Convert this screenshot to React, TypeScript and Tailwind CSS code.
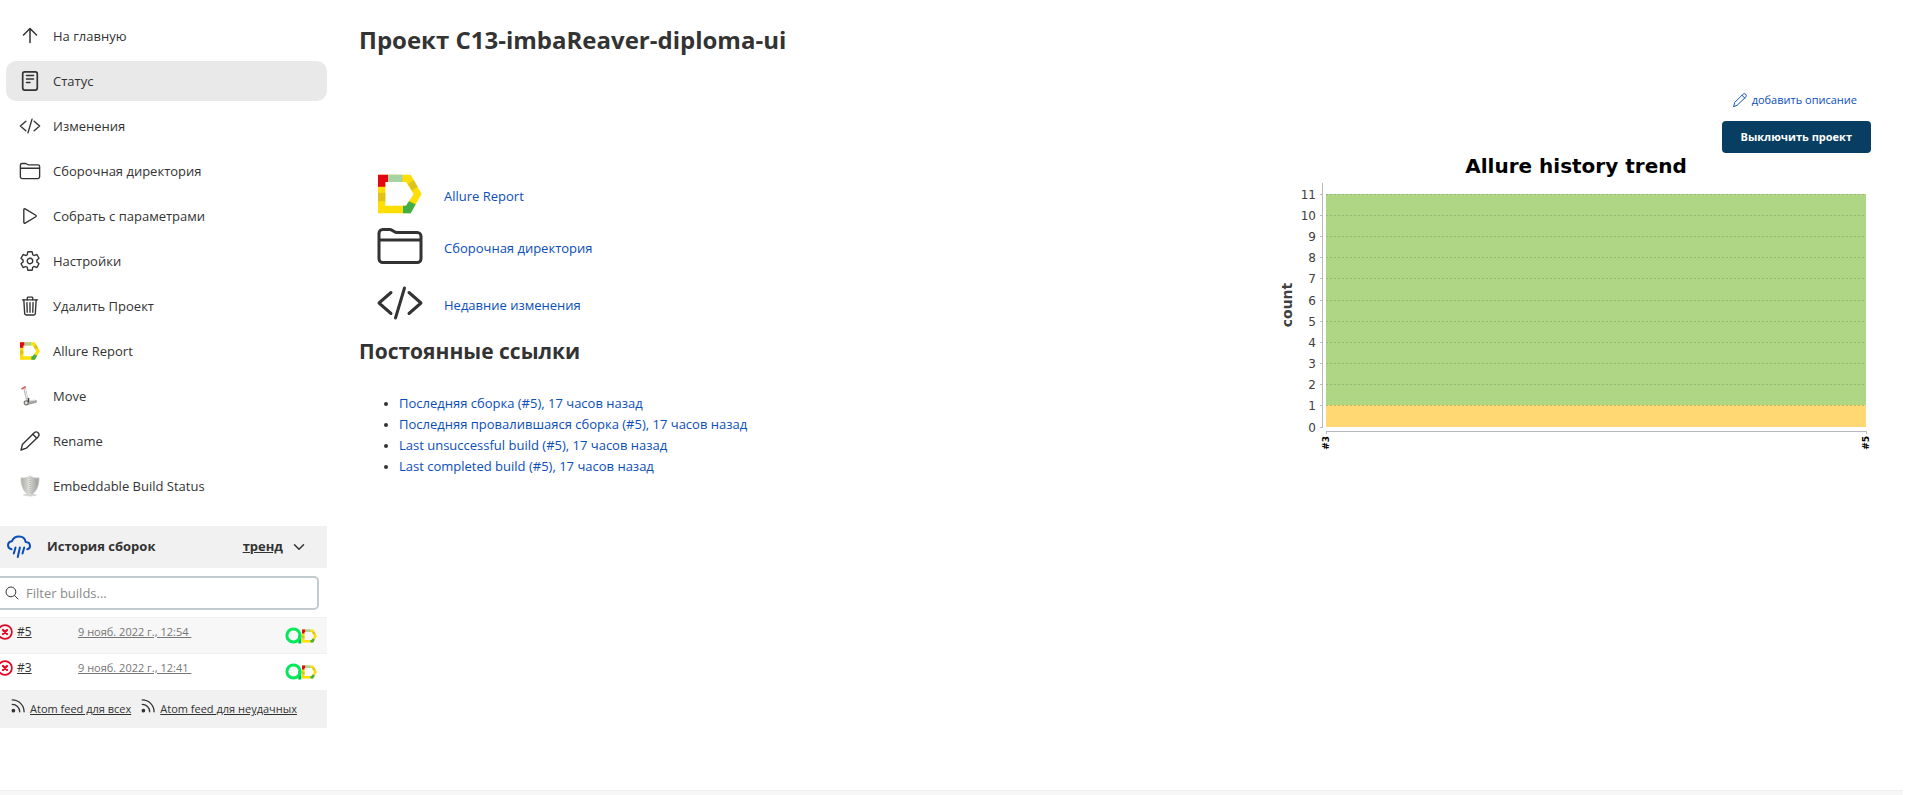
import React from "react";
import {
  IoChevronDownOutline,
  IoCodeSlashOutline,
  IoFolderOutline,
  IoPlayOutline,
  IoSearchOutline,
  IoSettingsOutline,
  IoTrashOutline,
} from "react-icons/io5";

type IconProps = { className?: string };

function AllureIcon({ className }: IconProps) {
  return (
    <svg viewBox="0 0 132 116" className={className} aria-hidden="true">
      <path fill="#ffde06" fillRule="evenodd" d="M0 0H98L131 58 98 116H0ZM22 22V93H84L107 58 84 22Z" />
      <path fill="#e30613" d="M0 0H30V22H22V36H0Z" />
      <path fill="#a5d3a3" d="M30 0H73V22H30Z" />
      <path fill="#dfc31a" d="M0 54H22V80H0ZM107 16 119 37 102 48 90 29Z" />
      <path fill="#3fb049" d="M75 93H84L93 80 113 89 98 116H75Z" />
    </svg>
  );
}

function ArrowUpIcon({ className }: IconProps) {
  return (
    <svg viewBox="0 0 20 20" className={className} fill="none" stroke="currentColor" strokeWidth="1.5" strokeLinecap="round" strokeLinejoin="round" aria-hidden="true">
      <path d="M3.500 9 10 2.500 16.500 9M10 2.800V16.500" />
    </svg>
  );
}

function DocumentIcon({ className }: IconProps) {
  return (
    <svg viewBox="0 0 20 20" className={className} fill="none" stroke="currentColor" strokeLinecap="round" strokeLinejoin="round" aria-hidden="true">
      <rect x="2.7" y="0.9" width="14.6" height="18.2" rx="2" strokeWidth="1.7" />
      <path strokeWidth="1.5" d="M6.500 4.600H13.500M6.500 8H13.500M6.500 11.400H10" />
    </svg>
  );
}

function PencilIcon({ className }: IconProps) {
  return (
    <svg viewBox="0 0 20 20" className={className} fill="none" stroke="currentColor" strokeWidth="1.4" strokeLinecap="round" strokeLinejoin="round" aria-hidden="true">
      <path d="M1 19 2.400 13.600 14 2C15.300.7 17 .7 18.100 1.800 19.300 3 19.200 4.700 18 6L6.300 17.200Z" />
      <path d="M12.800 3.200 16.800 7.200" />
    </svg>
  );
}

function MoveIcon({ className }: IconProps) {
  return (
    <svg viewBox="0 0 20 20" className={className} fill="none" strokeLinecap="round" aria-hidden="true">
      <path d="M4.500 2 7.500 15" stroke="#b9b9b5" strokeWidth="2.600" />
      <path d="M5 3 7.600 14" stroke="#f4f4f2" strokeWidth="1" />
      <path d="M1.800 2.800 5.200.8" stroke="#d9565b" strokeWidth="1.500" />
      <path d="M7 17.500 15.500 15.500" stroke="#a3a5a1" strokeWidth="3" />
      <path d="M9 15 15 14.200" stroke="#d8dad6" strokeWidth="1.200" />
      <circle cx="6.200" cy="16.800" r="2" fill="#e8e8e6" stroke="#777975" strokeWidth="1.200" />
      <path d="M8.500 12.500V15.500" stroke="#3d3d3d" strokeWidth="1.500" />
    </svg>
  );
}

function ShieldIcon({ className }: IconProps) {
  return (
    <svg viewBox="0 0 20 22" className={className} aria-hidden="true">
      <defs>
        <linearGradient id="shield" x1="0" x2="1" y1="0" y2="0">
          <stop offset="0" stopColor="#a9aba7" />
          <stop offset="0.500" stopColor="#e2e3df" />
          <stop offset="0.550" stopColor="#c9cac6" />
          <stop offset="1" stopColor="#999b97" />
        </linearGradient>
      </defs>
      <ellipse cx="10" cy="20" rx="7" ry="1.500" fill="#d9d9d9" />
      <path d="M10 .8C12 2.800 15.500 3.300 19 2.800 19.200 10 17 17 10 20.800 3 17 .8 10 1 2.800 4.500 3.300 8 2.800 10 .8Z" fill="url(#shield)" stroke="#c9cac6" strokeWidth="0.800" />
      <path d="M10 3V18" stroke="#a5a7a3" strokeWidth="1" strokeDasharray="1 1" />
    </svg>
  );
}

function RainIcon({ className }: IconProps) {
  return (
    <svg viewBox="0 0 24 24" className={className} fill="none" stroke="currentColor" strokeWidth="2" strokeLinecap="round" strokeLinejoin="round" aria-hidden="true">
      <path d="M4.600 14.300C2.500 13.800 1 12.300 1 10.300 1 8 2.700 6.500 5 6.200 6 3.500 8.700 1.600 12 1.600 15.300 1.600 18 3.600 18.600 6.900 21.200 7 23 8.600 23 10.900 23 12.700 21.900 13.900 20.200 14.200" />
      <path d="M8.500 12.500 6.800 18.500M12.900 12.500 10.800 22M17.200 12.500 15.500 18.500" />
    </svg>
  );
}

function RssIcon({ className }: IconProps) {
  return (
    <svg viewBox="0 0 14 14" className={className} fill="none" stroke="currentColor" strokeWidth="1.300" strokeLinecap="round" aria-hidden="true">
      <circle cx="2.400" cy="11.600" r="1.200" fill="currentColor" />
      <path d="M1.200 5.300A7.500 7.500 0 0 1 8.700 12.800M1.200.9A11.900 11.900 0 0 1 13.100 12.800" />
    </svg>
  );
}

function FailedIcon({ className }: IconProps) {
  return (
    <svg viewBox="0 0 16 16" className={className} fill="none" stroke="#e6001f" strokeLinecap="round" aria-hidden="true">
      <circle cx="8" cy="8" r="6.900" strokeWidth="1.700" />
      <path d="M6 6 10 10M10 6 6 10" strokeWidth="2.200" />
    </svg>
  );
}

function AllureTestOpsIcon({ className }: IconProps) {
  return (
    <svg viewBox="0 0 17 17" className={className} fill="none" strokeWidth="3" aria-hidden="true">
      <path d="M14.800 8V16.500" stroke="#08b944" />
      <circle cx="8.500" cy="8.500" r="6.600" stroke="#04e85a" />
    </svg>
  );
}

const tasks: { label: string; icon: React.ReactNode; active?: boolean }[] = [
  { label: "На главную", icon: <ArrowUpIcon className="size-5" /> },
  { label: "Статус", icon: <DocumentIcon className="size-5" />, active: true },
  { label: "Изменения", icon: <IoCodeSlashOutline className="size-[22px]" /> },
  { label: "Сборочная директория", icon: <IoFolderOutline className="size-[22px]" /> },
  { label: "Собрать с параметрами", icon: <IoPlayOutline className="size-[22px]" /> },
  { label: "Настройки", icon: <IoSettingsOutline className="size-[22px]" /> },
  { label: "Удалить Проект", icon: <IoTrashOutline className="size-[22px]" /> },
  { label: "Allure Report", icon: <AllureIcon className="h-5 w-5" /> },
  { label: "Move", icon: <MoveIcon className="size-5" /> },
  { label: "Rename", icon: <PencilIcon className="size-5" /> },
  { label: "Embeddable Build Status", icon: <ShieldIcon className="h-[22px] w-5" /> },
];

const builds = [
  { id: "#5", date: "9 нояб. 2022 г., 12:54" },
  { id: "#3", date: "9 нояб. 2022 г., 12:41" },
];

const shortcuts = [
  { label: "Allure Report", icon: <AllureIcon className="h-10 w-11" />, row: "h-13" },
  { label: "Сборочная директория", icon: <IoFolderOutline className="size-12" />, row: "h-[57px]" },
  { label: "Недавние изменения", icon: <IoCodeSlashOutline className="size-12" />, row: "h-14" },
];

const permalinks = [
  "Последняя сборка (#5), 17 часов назад",
  "Последняя провалившаяся сборка (#5), 17 часов назад",
  "Last unsuccessful build (#5), 17 часов назад",
  "Last completed build (#5), 17 часов назад",
];

function Sidebar() {
  return (
    <aside className="w-[327px] shrink-0 overflow-hidden pt-4">
      <nav className="flex flex-col gap-[5px] pl-1.5">
        {tasks.map((t) => (
          <a
            key={t.label}
            href="#"
            className={
              t.active
                ? "flex h-10 items-center gap-[11px] rounded-[10px] bg-[#e9e9e9] pl-3 text-[13px] font-medium"
                : "flex h-10 items-center gap-[11px] rounded-[10px] pl-3 text-[13px]"
            }
          >
            <span className="flex w-6 justify-center">{t.icon}</span>
            <span className="pt-0.5">{t.label}</span>
          </a>
        ))}
      </nav>

      <section className="mt-5">
        <div className="flex h-[42px] items-center bg-[#f1f1f1] pr-5 pl-[7px]">
          <RainIcon className="size-6 text-[#0b4eb9]" />
          <h2 className="ml-4 flex-1 text-[13px] font-bold">История сборок</h2>
          <a href="#" className="text-[13px] font-bold underline">тренд</a>
          <IoChevronDownOutline className="ml-2 size-4" />
        </div>
        <div className="-ml-2 mt-2 mr-2 flex h-[34px] items-center rounded-[5px] border-2 border-[#c1cbcf] pl-2.5">
          <IoSearchOutline className="size-4 shrink-0" />
          <input
            type="text"
            aria-label="Filter builds"
            placeholder="Filter builds..."
            className="ml-1.5 min-w-0 flex-1 pt-px text-[13px] outline-none placeholder:text-[#8b8b8b]"
          />
        </div>
        <table className="mt-[7px] -ml-1 w-[331px] border-collapse">
          <tbody>
            {builds.map((b) => (
              <tr key={b.id} className="h-9 border-t border-[#f0f0f0] align-top odd:bg-[#f7f7f7]">
                <td className="w-[82px] pt-1 pl-px">
                  <span className="flex h-5 items-center gap-1">
                    <FailedIcon className="size-4" />
                    <a href="#" className="text-xs underline">{b.id}</a>
                  </span>
                </td>
                <td className="pt-1">
                  <span className="flex h-5 items-center">
                    <a href="#" className="text-[11px] whitespace-pre text-[#767676] underline">{b.date + " "}</a>
                  </span>
                </td>
                <td className="pt-[9px] pr-2.5">
                  <span className="flex items-center justify-end">
                    <AllureTestOpsIcon className="size-[17px]" />
                    <AllureIcon className="h-[14px] w-[15px]" />
                  </span>
                </td>
              </tr>
            ))}
          </tbody>
        </table>
        <div className="flex h-[38px] items-center bg-[#f1f1f1] pl-[11px] text-[11px]">
          <RssIcon className="mb-1.5 size-[14px]" />
          <a href="#" className="ml-[5px] pt-0.5 underline">Atom feed для всех</a>
          <RssIcon className="mb-1.5 ml-2.5 size-[14px]" />
          <a href="#" className="ml-[5px] pt-0.5 underline">Atom feed для неудачных</a>
        </div>
      </section>
    </aside>
  );
}

function TrendChart() {
  const ticks = Array.from({ length: 12 }, (_, i) => i);
  const yOf = (v: number) => Math.round(273.5 - v * 21.15) + 0.5;
  return (
    <svg width="600" height="300" viewBox="0 0 600 300" className="max-w-full" role="img" aria-label="Allure history trend">
      <g fontFamily="DejaVu Sans">
        <text x="305" y="20" textAnchor="middle" fontSize="20" fontWeight="bold" fill="#000">Allure history trend</text>
        <rect x="55" y="41" width="540" height="211" fill="#aed684" />
        <rect x="55" y="252" width="540" height="22" fill="#ffd873" />
        {ticks.slice(1).map((v) => (
          <path key={v} d={`M55 ${yOf(v)}H595`} stroke="#7d9a5f" strokeOpacity="0.5" strokeDasharray="2 2" />
        ))}
        <path d="M51.500 30V274.500M55 278.500H595.500V281M55.500 278.500V281" stroke="#b9b9b9" fill="none" />
        {ticks.map((v) => (
          <g key={v}>
            <path d={`M49 ${yOf(v)}H52`} stroke="#b9b9b9" />
            <text x="45" y={yOf(v) + 4.500} textAnchor="end" fontSize="12" fill="#404040">{v}</text>
          </g>
        ))}
        <text transform="translate(21 152) rotate(-90)" textAnchor="middle" fontSize="14" fontWeight="bold" fill="#404040">count</text>
        <text transform="translate(58 283) rotate(-90)" textAnchor="end" fontSize="9" fontWeight="bold" fill="#000">#3</text>
        <text transform="translate(598 283) rotate(-90)" textAnchor="end" fontSize="9" fontWeight="bold" fill="#000">#5</text>
      </g>
    </svg>
  );
}

export default function App() {
  return (
    <div className="min-h-screen bg-white pr-[17px] font-['Open_Sans','Noto_Sans',sans-serif] text-[#333]">
      <div className="flex min-h-[790px]">
        <Sidebar />
        <main className="min-w-0 flex-1 pt-5 pr-8 pl-8">
          <h1 className="text-2xl leading-10 font-bold">Проект C13-imbaReaver-diploma-ui</h1>
          <div className="flex justify-between">
            <div className="pt-[110px]">
              <ul className="pl-[17px]">
                {shortcuts.map((s) => (
                  <li key={s.label} className={s.row}>
                    <a href="#" className="flex items-center gap-5 text-[13px] font-medium text-[#0b4eb9]">
                      <span className="flex h-12 w-12 items-center justify-center text-[#333]">{s.icon}</span>
                      <span className="pt-[5px]">{s.label}</span>
                    </a>
                  </li>
                ))}
              </ul>
              <h2 className="text-[21px] leading-8 font-bold">Постоянные ссылки</h2>
              <ul className="mt-[26px] list-disc pl-10 text-[13px] leading-[21px] marker:text-xs">
                {permalinks.map((p) => (
                  <li key={p}>
                    <a href="#" className="font-medium text-[#0b4eb9]">{p}</a>
                  </li>
                ))}
              </ul>
            </div>
            <div className="flex flex-col items-end pt-7">
              <a href="#" className="mr-3.5 flex items-center gap-[5px] text-[11px] leading-6 font-medium text-[#0b4eb9]">
                <PencilIcon className="size-[14px]" />
                добавить описание
              </a>
              <button type="button" className="mt-[9px] h-8 rounded-[4px] bg-[#083e61] px-[19px] text-[11px] font-bold text-white">
                Выключить проект
              </button>
              <TrendChart />
            </div>
          </div>
        </main>
      </div>
      <footer className="h-[5px] border-t border-[#efefef] bg-[#f7f7f7]" />
    </div>
  );
}
